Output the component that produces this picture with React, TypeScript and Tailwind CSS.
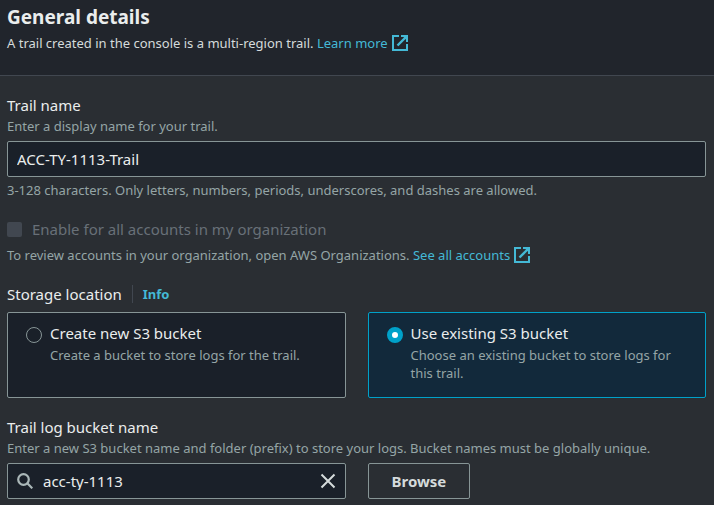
import { useState } from "react";
import type { ReactNode } from "react";

function ExternalIcon() {
  return (
    <svg viewBox="0 0 16 16" className="h-4 w-4 shrink-0" fill="none" stroke="currentColor" strokeWidth="2" aria-hidden="true">
      <path d="M7 1H1v14h14V9" />
      <path d="M9 1h6v6" />
      <path d="M14.5 1.5 5.5 10.5" strokeWidth="2.4" />
      <path d="M10.5 1H15v4.5z" fill="currentColor" stroke="none" />
    </svg>
  );
}

function ExternalLink({ children }: { children: ReactNode }) {
  return (
    <a href="#" className="inline-flex items-center gap-1 text-[#44b9d6]">
      {children}
      <ExternalIcon />
    </a>
  );
}

type TileProps = {
  value: string;
  title: string;
  description: string;
  selected: boolean;
  onSelect: (value: string) => void;
};

function Tile({ value, title, description, selected, onSelect }: TileProps) {
  return (
    <label
      className={
        selected
          ? "flex gap-2 rounded-xs border border-[#00a1c9] bg-[#12293b] pt-[9px] pr-6 pb-[15px] pl-[18px]"
          : "flex gap-2 rounded-xs border border-[#879596] bg-[#1a2029] pt-[9px] pr-6 pb-[15px] pl-[18px]"
      }
    >
      <input
        type="radio"
        name="storage"
        value={value}
        checked={selected}
        onChange={() => onSelect(value)}
        className="mt-[5px] h-4 w-4 shrink-0 appearance-none rounded-full border border-[#879596] checked:border-5 checked:border-[#00a1c9] checked:bg-white"
      />
      <span>
        <span className="block text-[15px] leading-[22px] text-[#eaeded]">{title}</span>
        <span className="mt-0.5 block text-[13px] leading-[18px] text-[#95a5a6]">{description}</span>
      </span>
    </label>
  );
}

export default function App() {
  const [storage, setStorage] = useState("existing");
  const [name, setName] = useState("ACC-TY-1113-Trail");
  const [bucket, setBucket] = useState("acc-ty-1113");

  return (
    <main className="min-h-screen bg-[#2a2e33] font-['Noto_Sans','Open_Sans',sans-serif] text-[13px] leading-[18px] text-[#95a5a6]">
      <header className="border-b border-[#414750] bg-[#21252c] pt-1 pr-2 pb-[23px] pl-[7px]">
        <h2 className="text-[19px] leading-[26px] font-bold text-[#eaeded]">General details</h2>
        <p className="mt-1 text-[#d5dbdb]">
          A trail created in the console is a multi-region trail. <ExternalLink>Learn more</ExternalLink>
        </p>
      </header>

      <form className="flex flex-col pt-[18px] pr-2 pb-1.5 pl-[7px]" onSubmit={(e) => e.preventDefault()}>
        <div>
          <label htmlFor="trail" className="block text-[15px] leading-[22px] text-[#eaeded]">Trail name</label>
          <p className="mt-px">Enter a display name for your trail.</p>
          <input
            id="trail"
            value={name}
            onChange={(e) => setName(e.target.value)}
            className="mt-1.5 block h-9 w-full rounded-xs border border-[#879596] bg-[#1a2029] px-[9px] text-[15px] text-[#eaeded]"
          />
          <p className="mt-1">3-128 characters. Only letters, numbers, periods, underscores, and dashes are allowed.</p>
        </div>

        <div className="mt-[19px]">
          <label className="flex items-center gap-2.5 text-[15px] leading-[22px] text-[#687078]">
            <input type="checkbox" disabled className="h-[15px] w-[15px] appearance-none rounded-xs bg-[#414750]" />
            Enable for all accounts in my organization
          </label>
          <p className="mt-1.5">
            To review accounts in your organization, open AWS Organizations. <ExternalLink>See all accounts</ExternalLink>
          </p>
        </div>

        <fieldset className="mt-[19px]">
          <legend className="flex items-center text-[15px] leading-[22px] text-[#eaeded]">
            Storage location
            <a href="#" className="ml-2.5 border-l border-[#414750] pl-2.5 text-[13px] leading-[18px] font-bold text-[#44b9d6]">Info</a>
          </legend>
          <div className="mt-[7px] grid grid-cols-2 gap-[22px]">
            <Tile value="new" title="Create new S3 bucket" description="Create a bucket to store logs for the trail." selected={storage === "new"} onSelect={setStorage} />
            <Tile value="existing" title="Use existing S3 bucket" description="Choose an existing bucket to store logs for this trail." selected={storage === "existing"} onSelect={setStorage} />
          </div>
        </fieldset>

        <div className="mt-[18px]">
          <label htmlFor="bucket" className="block text-[15px] leading-[22px] text-[#eaeded]">Trail log bucket name</label>
          <p className="mt-px">Enter a new S3 bucket name and folder (prefix) to store your logs. Bucket names must be globally unique.</p>
          <div className="mt-1.5 grid grid-cols-2 gap-[22px]">
            <div className="flex h-9 items-center rounded-xs border border-[#879596] bg-[#1a2029] px-[9px]">
              <svg viewBox="0 0 16 16" className="h-4 w-4 shrink-0" fill="none" stroke="#aab7b8" strokeWidth="2.2" aria-hidden="true">
                <circle cx="6.5" cy="6.5" r="5.3" />
                <path d="m10.3 10.3 5 5" />
              </svg>
              <input
                id="bucket"
                value={bucket}
                onChange={(e) => setBucket(e.target.value)}
                className="ml-2.5 min-w-0 flex-1 bg-transparent text-[15px] text-[#eaeded]"
              />
              <button type="button" aria-label="Clear" onClick={() => setBucket("")} className="text-[#d5dbdb]">
                <svg viewBox="0 0 16 16" className="h-4 w-4" fill="none" stroke="currentColor" strokeWidth="2" aria-hidden="true">
                  <path d="m1.5 1.5 13 13M14.5 1.5l-13 13" />
                </svg>
              </button>
            </div>
            <button type="button" className="h-9 justify-self-start rounded-xs border border-[#879596] px-[23px] text-[15px] font-bold text-[#d5dbdb]">Browse</button>
          </div>
        </div>
      </form>
    </main>
  );
}
